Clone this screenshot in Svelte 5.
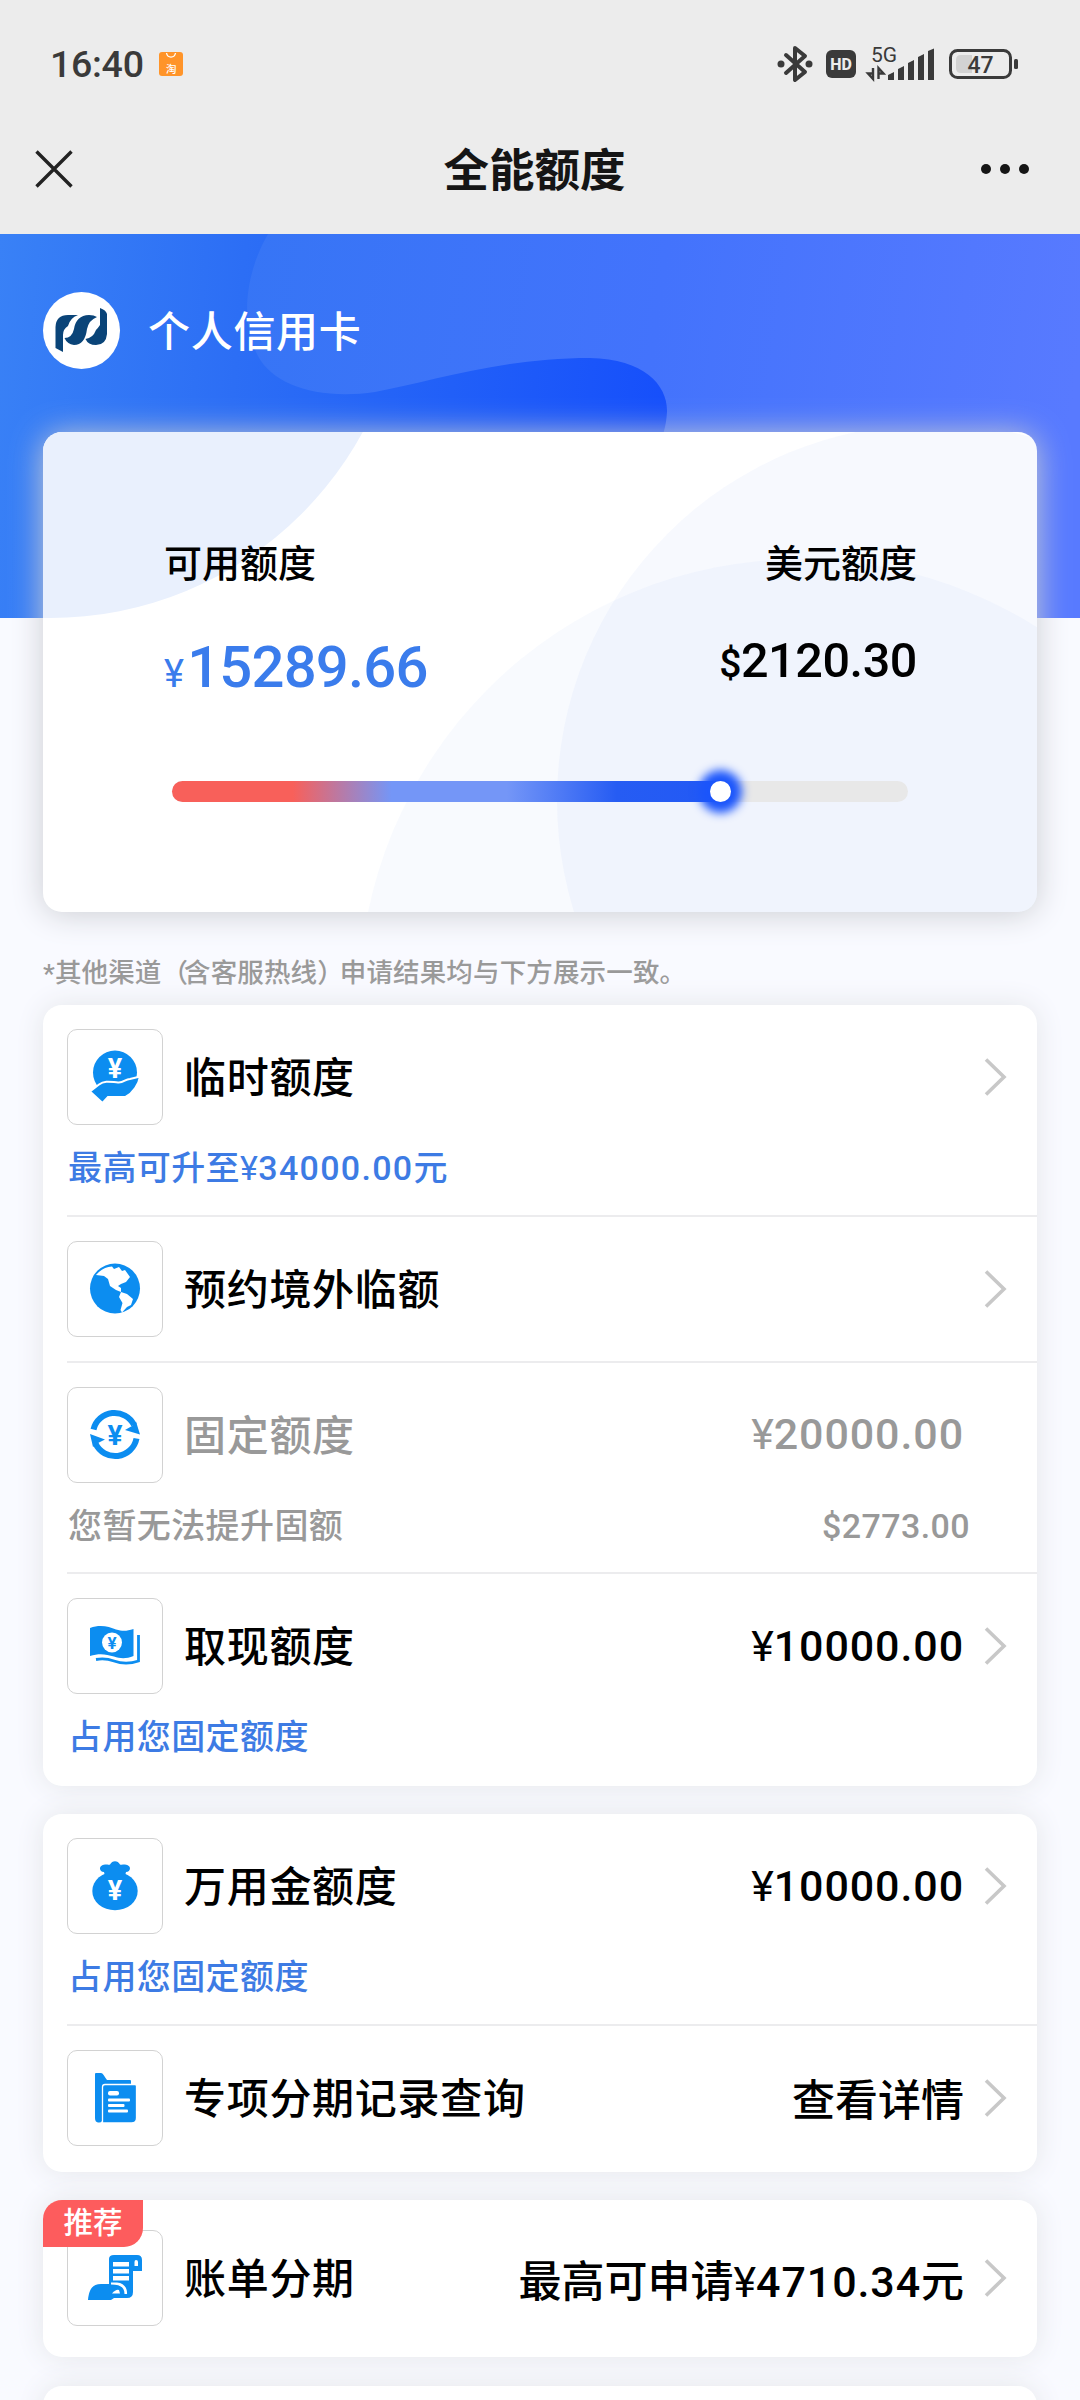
<script>
    const groups = [
        {
            items: [
                { icon: 'hand', title: '临时额度', sub: '最高可升至¥34000.00元', arrow: true },
                { icon: 'globe', title: '预约境外临额', arrow: true },
                {
                    icon: 'cycle',
                    title: '固定额度',
                    value: '¥20000.00',
                    sub: '您暂无法提升固额',
                    subValue: '$2773.00',
                    disabled: true
                },
                { icon: 'cash', title: '取现额度', value: '¥10000.00', sub: '占用您固定额度', arrow: true }
            ]
        },
        {
            items: [
                { icon: 'bag', title: '万用金额度', value: '¥10000.00', sub: '占用您固定额度', arrow: true },
                { icon: 'folder', title: '专项分期记录查询', value: '查看详情', arrow: true }
            ]
        },
        {
            badge: '推荐',
            items: [
                { icon: 'bill', title: '账单分期', value: '最高可申请¥4710.34元', arrow: true }
            ]
        },
        { items: [] }
    ];

    let used = $state(74.6);

    // yen sign, digits and words are spaced differently
    function parts(text) {
        return text.split(/(¥|[\d.]+)/).filter(Boolean);
    }
</script>

{#snippet money(text)}
    {#each parts(text) as p}<span class:yen={p === '¥'} class:num={/^\d/.test(p)}>{p}</span>{/each}
{/snippet}

{#snippet icon(name)}
    <svg class="icon" viewBox="0 0 96 96">
        {#if name === 'hand'}
            <circle cx="48" cy="43.5" r="22" />
            <path
                d="M23 62.500L32 55.500C38 51 44 53 51 53.500C57 54 58 50 63 50L73 47.500C72 55 66 64 58.500 68H41L35.500 74Z"
                stroke="#fff"
                stroke-width="2"
            />
            <text class="sign" x="48" y="48.500" font-size="27">¥</text>
        {:else if name === 'globe'}
            <circle cx="48" cy="47.500" r="25" />
            <path
                class="cut"
                d="M29 34C34 28 39 26 45 25.500L47 28L52 26L55 30L58 29L63 36L59 41L54 43L51 45L54 47L54 51L49 49L43 45L41 38L37 35Z"
            />
            <path class="cut" d="M54 51L60 53L66 58L64 64L60 66L55 71.500L53.500 69L55.500 62L52 56Z" />
        {:else if name === 'cycle'}
            <path class="ring" d="M26.500 42.500A21.700 21.700 0 0 1 67 38" />
            <path class="ring" d="M69.500 51.500A21.700 21.700 0 0 1 28.500 56.500" />
            <path d="M69 34.500L73 47.500L58 43L65 39Z" />
            <path d="M26 60L23 47L38 52.500L31 56Z" />
            <text class="sign blue" x="48" y="57.500" font-size="28">¥</text>
        {:else if name === 'cash'}
            <path
                d="M23 30C34 26 42 29 49 31.500C56 33.500 60 33 66.500 31V58C59 61 53 60.500 47 58.500C39 56 32 55 23 58Z"
            />
            <path
                d="M71.500 37V63C61 66.500 54 65.500 47 63C40 60.500 35 60.500 29 61.500"
                class="line"
            />
            <circle class="cut" cx="45" cy="44.500" r="10" />
            <text class="sign blue" x="45" y="50.500" font-size="17">¥</text>
        {:else if name === 'bag'}
            <ellipse cx="48" cy="53" rx="22.700" ry="19.300" />
            <path
                d="M38 38L37 34C32 34 31 27 38 26.500C41 26.500 42 27 43 26.500C45 22 51 22 53 26.500C54 27 56 26.500 58 26.500C65 27 64 34 59 34L58 38Z"
            />
            <text class="sign" x="48" y="62" font-size="27">¥</text>
        {:else if name === 'folder'}
            <path d="M28 24Q28 23 29 23H34C36 23 37 26 40 30H63Q64 30 64 31V38H35V71Q34 73 31 72.500Q28 72 28 68Z" />
            <path
                d="M38 34.500H68Q69.500 34.500 69.500 36V68Q69.500 73 64.500 73H35.500V37Q35.500 34.500 38 34.500Z"
                stroke="#fff"
                stroke-width="1.300"
            />
            <rect class="cut" x="41" y="41" width="11" height="4.500" rx="2" />
            <rect class="cut" x="41" y="48.500" width="22" height="3" rx="1" />
            <rect class="cut" x="41" y="54" width="16.500" height="3" rx="1" />
            <rect class="cut" x="41" y="59.500" width="20" height="3" rx="1" />
        {:else if name === 'bill'}
            <path d="M42 54V29Q42 25 47 25H70Q75 25 75 30V41H66V62Q66 68 60 68H40Z" />
            <path class="cut" d="M67.500 36V32Q67.500 30 69 30Q71 30 71 32V36Z" />
            <rect class="cut" x="46" y="32" width="16" height="4.500" />
            <rect class="cut" x="46" y="39" width="16" height="4.500" />
            <rect class="cut" x="46" y="46" width="16" height="4.500" />
            <path d="M21 70C22 60 25 54 34 54H47C54 54 58 58 58 64L50 66L44 70Z" />
            <path class="cut" d="M44 52.500H50C57 53 60.500 58 60 64H57.500C57.500 57 53 54.500 44 54.500Z" />
            <path class="cut" d="M45 63.500Q49 59 52 60L53 63.500Z" />
        {/if}
    </svg>
{/snippet}

<div class="page">
    <header class="top">
        <div class="status">
            <div class="clock">
                <span>16:40</span>
                <svg width="24" height="24" viewBox="0 0 24 24">
                    <rect width="24" height="24" rx="3" fill="#ff9429" />
                    <path d="M7.500 1C8.500 6.500 15.500 6.500 16.500 1" fill="none" stroke="#fff" stroke-width="1.300" />
                    <text x="12" y="21" font-size="10.500" text-anchor="middle" fill="#fff">淘</text>
                </svg>
            </div>
            <svg class="signals" width="244" height="40" viewBox="0 0 244 40">
                <path
                    d="M9 11L28 28L18 36V4L28 12L9 29"
                    fill="none"
                    stroke="#3a3a3a"
                    stroke-width="4"
                    stroke-linejoin="round"
                    stroke-linecap="round"
                />
                <circle cx="4" cy="20" r="3.500" />
                <circle cx="32" cy="20" r="3.500" />
                <rect x="49" y="6" width="30" height="28" rx="6" />
                <text x="64" y="26" font-size="16" font-weight="800" text-anchor="middle" fill="#ececec">HD</text>
                <text x="94" y="17.500" font-size="21" font-weight="400">5G</text>
                <path d="M96 24V35L91 29.500H96M101.500 35V24L106.500 29.500H101.500" fill="none" stroke="#3a3a3a" stroke-width="2.400" />
                <path d="M111 31L117 28V36H111ZM121 25L127 22V36H121ZM131 19L137 16V36H131ZM141 13L147 10V36H141ZM151 7L157 4.500V36H151Z" />
                <rect x="173.500" y="6.500" width="60" height="27" rx="7" fill="none" stroke="#3a3a3a" stroke-width="3" />
                <path d="M184 11H195V29H184Q179 29 179 24V16Q179 11 184 11Z" fill="#d2d2d2" />
                <text x="203.500" y="28.500" font-size="23" font-weight="500" text-anchor="middle">47</text>
                <rect x="237" y="15" width="4" height="10" rx="1.500" />
            </svg>
        </div>
        <nav class="nav">
            <svg width="38" height="38" viewBox="0 0 38 38">
                <path d="M1.500 1.500L36.500 36.500M36.500 1.500L1.500 36.500" stroke="#222" stroke-width="3.400" />
            </svg>
            <h1>全能额度</h1>
            <svg width="50" height="12" viewBox="0 0 50 12" fill="#151515">
                <circle cx="6" cy="6" r="5" />
                <circle cx="25" cy="6" r="5" />
                <circle cx="44" cy="6" r="5" />
            </svg>
        </nav>
    </header>

    <section class="hero">
        <svg class="hero-bg" width="1080" height="384" viewBox="0 0 1080 384">
            <defs>
                <linearGradient id="base" x1="0" x2="680" y1="0" y2="60" gradientUnits="userSpaceOnUse">
                    <stop offset="0" stop-color="#3981f6" />
                    <stop offset=".36" stop-color="#2c6ef5" />
                    <stop offset=".68" stop-color="#215ff8" />
                    <stop offset="1" stop-color="#164ffb" />
                </linearGradient>
                <linearGradient id="blob" x1="240" x2="1080" y1="0" y2="120" gradientUnits="userSpaceOnUse">
                    <stop offset="0" stop-color="#3675f5" />
                    <stop offset=".5" stop-color="#4373fc" />
                    <stop offset="1" stop-color="#587aff" />
                </linearGradient>
            </defs>
            <rect width="1080" height="384" fill="url(#base)" />
            <path
                d="M268 0C245 40 240 88 258 122C274 152 320 166 375 158C430 148 500 124 590 124C645 125 668 152 667 178C666 194 663 200 658 215L600 384H1080V0Z"
                fill="url(#blob)"
            />
        </svg>
        <div class="owner">
            <div class="logo">
                <svg width="77" height="77" viewBox="0 0 77 77" fill="#0a4478">
                    <path d="M12.500 56V35Q13 23 25 23H35Q27 26 25 34Q20 37 20 43V60Z" />
                    <path d="M21.500 46Q29 46 31 37Q33 23.500 46 23Q51 23 54 25Q46 28 44 37Q42 53 31 53Q24 52 21.500 46Z" />
                    <path d="M57 16Q63 18 64 22V42Q63 53 53 53Q45 53 42.500 47Q50 46 53 38Q55 36 57 33Z" />
                </svg>
            </div>
            <span>个人信用卡</span>
        </div>
    </section>

    <section class="summary">
        <svg class="summary-bg" width="994" height="480" viewBox="0 0 994 480">
            <circle cx="7" cy="-170" r="356" fill="#e9f0fd" />
            <circle cx="890" cy="368" r="376" fill="#3b7af0" fill-opacity=".045" />
            <circle cx="758" cy="569" r="442" fill="#3b7af0" fill-opacity=".035" />
        </svg>
        <div class="figures">
            <div>
                <p>可用额度</p>
                <div class="cny"><small>¥</small>15289.66</div>
            </div>
            <div class="right">
                <p>美元额度</p>
                <div class="usd"><small>$</small>2120.30</div>
            </div>
        </div>
        <div class="track">
            <div class="fill" style="width:{used}%">
                <i></i>
            </div>
        </div>
    </section>

    <p class="note">*其他渠道<span>（</span>含客服热线<span>）</span>申请结果均与下方展示一致。</p>

    {#each groups as group}
        <section class="group" class:tagged={group.badge}>
            {#if group.badge}
                <span class="badge">{group.badge}</span>
            {/if}
            {#each group.items as item}
                <div class="item" class:disabled={item.disabled}>
                    <div class="row">
                        <div class="box">{@render icon(item.icon)}</div>
                        <span class="title">{item.title}</span>
                        {#if item.value}
                            <span class="value">{@render money(item.value)}</span>
                        {/if}
                        {#if item.arrow}
                            <svg class="arrow" width="24" height="40" viewBox="0 0 24 40">
                                <path d="M3 2.500L21 20L3 37.500" />
                            </svg>
                        {/if}
                    </div>
                    {#if item.sub}
                        <div class="sub">
                            <span>{@render money(item.sub)}</span>
                            {#if item.subValue}
                                <span>{item.subValue}</span>
                            {/if}
                        </div>
                    {/if}
                </div>
            {/each}
        </section>
    {/each}
</div>

<style>

:global(body) {
    background: #f9faff;
}

.page {
    width: 1080px;
    height: 2400px;
    overflow: hidden;
    background: #f9faff;
    color: #000;
    font-family: Roboto, "Noto Sans CJK SC", sans-serif;
    font-weight: 500;
}

p,
h1 {
    margin: 0;
}

.top {
    height: 234px;
    background: #ececec;
}

.status {
    height: 128px;
    padding: 0 59px 0 50px;
    display: flex;
    align-items: center;
    justify-content: space-between;
    color: #3a3a3a;
}

.clock {
    display: flex;
    align-items: center;
    gap: 15px;
    font-size: 37.500px;
    letter-spacing: -.3px;
}

.signals {
    fill: #3a3a3a;
}

.nav {
    height: 82px;
    padding: 0 50px 0 35px;
    display: flex;
    align-items: center;
    justify-content: space-between;
}

h1 {
    padding: 5px 0 0 16px;
    font-size: 45.500px;
    line-height: 60px;
    font-weight: 700;
    color: #151515;
}

.hero {
    position: relative;
    height: 384px;
}

.hero-bg {
    position: absolute;
    top: 0;
    left: 0;
}

.owner {
    position: relative;
    display: flex;
    align-items: center;
    gap: 28px;
    padding: 58px 43px 0;
    color: #fff;
    font-size: 42px;
    letter-spacing: .7px;
}

.owner span {
    padding-bottom: 5px;
}

.logo {
    width: 77px;
    height: 77px;
    border-radius: 50%;
    background: #fff;
}

.summary {
    position: relative;
    box-sizing: border-box;
    height: 480px;
    margin: -186px 43px 0;
    padding: 104px 120px 0 121px;
    border-radius: 19px;
    background: #fff;
    box-shadow: 0 2px 32px #cbcdd2;
}

.summary-bg {
    position: absolute;
    top: 0;
    left: 0;
    border-radius: 19px;
}

.figures {
    position: relative;
    display: flex;
    justify-content: space-between;
    font-size: 38px;
    line-height: 56px;
}

.right {
    text-align: right;
}

.cny {
    margin-top: 35px;
    font-size: 58px;
    line-height: 80px;
    letter-spacing: -.8px;
    color: #3a7cec;
}

.cny small {
    margin-right: 4px;
    font-size: 38px;
    font-weight: 400;
}

.usd {
    margin-top: 29px;
    font-size: 48.500px;
    line-height: 80px;
    letter-spacing: -.4px;
}

.usd small {
    font-size: 39px;
}

.track {
    position: relative;
    height: 21px;
    margin: 67px 9px 0 8px;
    border-radius: 11px;
    background: #e8e8e8;
}

.fill {
    display: flex;
    justify-content: flex-end;
    height: 21px;
    border-radius: 11px 0 0 11px;
    background: linear-gradient(90deg, #f8605a 22%, #7496f7 40%, #7496f7 61%, #265cf3 81%, #2259f5);
}

.fill i {
    width: 21px;
    height: 21px;
    margin-right: -10px;
    border-radius: 50%;
    background: #fff;
    box-shadow: 0 0 10px 11px #1b55fb;
}

.note {
    height: 93.400px;
    padding: 42px 43px 0;
    box-sizing: border-box;
    font-size: 26.500px;
    line-height: 38px;
    letter-spacing: .15px;
    color: #999;
}

.note span {
    letter-spacing: -4px;
}

.group {
    position: relative;
    margin: 0 43px 28.600px;
    min-height: 60px;
    border-radius: 19px;
    background: #fff;
    box-shadow: 0 0 29px #e4e6e9;
}

.item {
    margin-left: 24px;
    padding: 24px 0;
    border-bottom: 2px solid #ececee;
}

.item:last-child {
    border-bottom-color: transparent;
}

.tagged .item {
    padding: 30px 0 29px;
}

.row {
    display: flex;
    align-items: center;
    height: 96px;
    padding-right: 30px;
}

.box {
    box-sizing: border-box;
    width: 96px;
    height: 96px;
    margin-right: 21px;
    border: 1px solid #d2d2d2;
    border-radius: 10px;
}

.icon {
    display: block;
    width: 96px;
    height: 96px;
    margin: -1px;
    fill: #0c8df0;
}

.cut {
    fill: #fff;
}

.ring {
    fill: none;
    stroke: #0c8df0;
    stroke-width: 6px;
}

.line {
    fill: none;
    stroke: #0c8df0;
    stroke-width: 2.800px;
}

.sign {
    fill: #fff;
    font-weight: 700;
    text-anchor: middle;
}

.blue {
    fill: #0c8df0;
}

.title {
    padding-bottom: 5px;
    font-size: 42px;
    letter-spacing: .7px;
}

.value {
    margin-left: auto;
    padding-bottom: 1px;
    font-size: 43px;
}

.value .num {
    letter-spacing: .9px;
}

.yen {
    font-weight: 400;
}

.arrow {
    margin-left: auto;
    fill: none;
    stroke: #c8c8c8;
    stroke-width: 3.600px;
}

.value + .arrow {
    margin-left: 19px;
}

.sub {
    display: flex;
    justify-content: space-between;
    height: 65.400px;
    padding: 0 67px 0 1px;
    font-size: 34px;
    line-height: 87px;
    letter-spacing: .4px;
    color: #3d7be4;
}

.sub .num {
    letter-spacing: 1.300px;
}

.disabled {
    color: #999;
}

.disabled .row {
    padding-right: 73px;
}

.disabled .sub {
    color: #999;
}

.badge {
    position: absolute;
    top: 0;
    left: 0;
    z-index: 1;
    width: 100px;
    height: 47px;
    border-radius: 19px 0;
    background: #fd5c5d;
    color: #fff;
    font-size: 29.500px;
    line-height: 47px;
    text-align: center;
}

</style>
